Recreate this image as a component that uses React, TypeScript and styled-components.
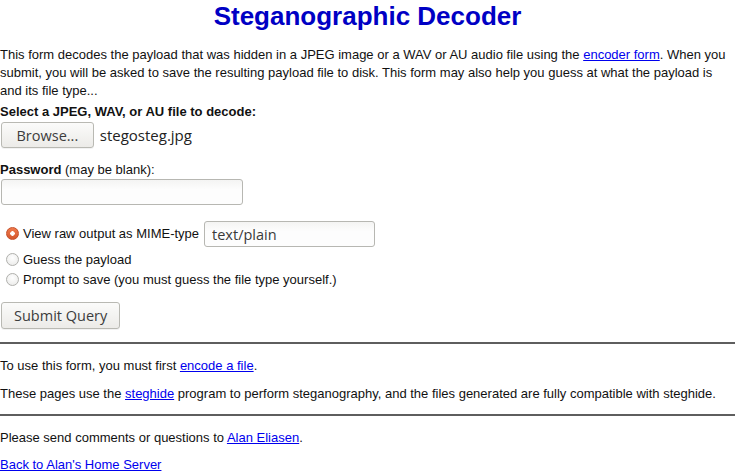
import React from "react";
import styled, { createGlobalStyle } from "styled-components";

const Global = createGlobalStyle`
  html, body { margin: 0; padding: 0; background: #fff; }
  body {
    font-family: "Liberation Sans", Arial, sans-serif;
    font-size: 13px;
    line-height: 18px;
    color: #111;
  }
`;

const Page = styled.div`
  width: 735px;
`;

const Title = styled.h1`
  margin: 1px 0 15px;
  font-size: 26px;
  line-height: 30px;
  font-weight: bold;
  text-align: center;
  color: #0000c4;
`;

const Para = styled.p<{ $mt?: number }>`
  margin: ${(p) => p.$mt ?? 0}px 0 0;
  line-height: 18px;
`;

const Link = styled.a`
  color: #0000ee;
  text-decoration: underline;
`;

const Form = styled.form`
  margin: 3px 0 0;
  display: flex;
  flex-direction: column;
  align-items: flex-start;
`;

const Label = styled.div<{ $mt?: number }>`
  margin-top: ${(p) => p.$mt ?? 0}px;
  line-height: 18px;
`;

const FileRow = styled.div`
  display: flex;
  align-items: center;
  gap: 6px;
  margin-top: 1px;
  margin-left: 1px;
`;

const Button = styled.button<{ $h?: number; $px?: number }>`
  height: ${(p) => p.$h ?? 26}px;
  padding: 0 ${(p) => p.$px ?? 13}px;
  border: 1px solid #b9b9b3;
  border-radius: 3px;
  background: linear-gradient(#fbfbfa, #ecebe8);
  font-family: "Open Sans", "DejaVu Sans", sans-serif;
  font-size: 14.5px;
  color: #3c3c3c;
  cursor: pointer;
  box-shadow: 0 1px 0 rgba(0,0,0,0.05);
`;

const FileName = styled.span`
  font-family: "Open Sans", "DejaVu Sans", sans-serif;
  font-size: 15px;
  color: #222;
`;

const TextInput = styled.input<{ $w: number }>`
  box-sizing: border-box;
  width: ${(p) => p.$w}px;
  height: 26px;
  border: 1px solid #b7b7b2;
  border-radius: 3px;
  background: linear-gradient(#f4f4f3, #fdfdfd 40%);
  font-family: "Open Sans", "DejaVu Sans", sans-serif;
  font-size: 14.5px;
  color: #3a3a3a;
  padding: 0 8px;
  outline: none;
`;

const PassInput = styled(TextInput)`
  margin-left: 1px;
`;

const Options = styled.div`
  margin-top: 16px;
  display: flex;
  flex-direction: column;
`;

const OptionRow = styled.label<{ $h: number; $mt?: number }>`
  display: flex;
  align-items: center;
  height: ${(p) => p.$h}px;
  margin-top: ${(p) => p.$mt ?? 0}px;
`;

const Radio = styled.input`
  appearance: none;
  width: 13px;
  height: 13px;
  margin: 0 4px 0 6px;
  border-radius: 50%;
  border: 1px solid #b0b0ac;
  background: radial-gradient(circle at 50% 35%, #ffffff, #e8e8e6);
  box-sizing: border-box;
  position: relative;
  top: -1px;
  &:checked {
    border-color: #c5502a;
    background: radial-gradient(circle, #ffffff 0 2px, transparent 2.5px),
      linear-gradient(#f07a4b, #d4572c);
  }
`;

const MimeInput = styled(TextInput)`
  margin-left: 5px;
  padding-left: 7px;
`;

const SubmitWrap = styled.div`
  margin-top: 12px;
  margin-left: 1px;
`;

const Rule = styled.hr<{ $mt: number }>`
  margin: ${(p) => p.$mt}px 0 0;
  border: none;
  border-top: 2px solid #5e5e5e;
  height: 0;
`;

export default function App() {
  return (
    <Page>
      <Global />
      <Title>Steganographic Decoder</Title>
      <Para>
        This form decodes the payload that was hidden in a JPEG image or a WAV or AU audio file using the{" "}
        <Link href="#">encoder form</Link>. When you submit, you will be asked to save the resulting payload
        file to disk. This form may also help you guess at what the payload is and its file type...
      </Para>
      <Form onSubmit={(e) => e.preventDefault()}>
        <Label>
          <b>Select a JPEG, WAV, or AU file to decode:</b>
        </Label>
        <FileRow>
          <Button type="button" $px={14.5}>Browse...</Button>
          <FileName>stegosteg.jpg</FileName>
        </FileRow>
        <Label $mt={13}>
          <b>Password</b> (may be blank):
        </Label>
        <PassInput $w={242} type="password" />
        <Options>
          <OptionRow $h={26}>
            <Radio type="radio" name="mode" defaultChecked />
            View raw output as MIME-type
            <MimeInput $w={171} type="text" defaultValue="text/plain" />
          </OptionRow>
          <OptionRow $h={20} $mt={3}>
            <Radio type="radio" name="mode" />
            Guess the payload
          </OptionRow>
          <OptionRow $h={20}>
            <Radio type="radio" name="mode" />
            Prompt to save (you must guess the file type yourself.)
          </OptionRow>
        </Options>
        <SubmitWrap>
          <Button type="submit" $h={27} $px={12}>Submit Query</Button>
        </SubmitWrap>
      </Form>
      <Rule $mt={13} />
      <Para $mt={13}>
        To use this form, you must first <Link href="#">encode a file</Link>.
      </Para>
      <Para $mt={10}>
        These pages use the <Link href="#">steghide</Link> program to perform steganography, and the files
        generated are fully compatible with steghide.
      </Para>
      <Rule $mt={11} />
      <Para $mt={13}>
        Please send comments or questions to <Link href="#">Alan Eliasen</Link>.
      </Para>
      <Para $mt={9}>
        <Link href="#">Back to Alan's Home Server</Link>
      </Para>
    </Page>
  );
}
